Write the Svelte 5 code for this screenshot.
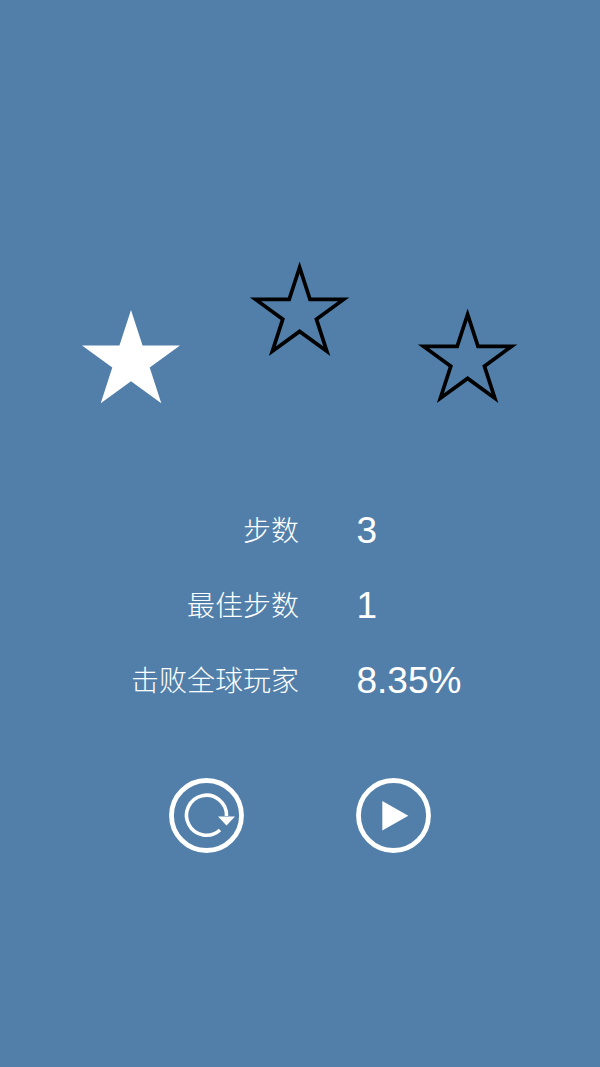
<script>
  function starPoints(radius, cx, cy) {
    const pts = [];
    for (let i = 0; i < 10; i++) {
      const r = i % 2 ? radius * 0.382 : radius;
      const a = (Math.PI / 5) * i - Math.PI / 2;
      pts.push((cx + r * Math.cos(a)).toFixed(2) + ',' + (cy + r * Math.sin(a)).toFixed(2));
    }
    return pts.join(' ');
  }
  const filled = starPoints(51.5, 49, 51.5);
  const outline = starPoints(46.3, 48.6, 50.7);
  const rows = [
    { label: '步数', value: '3' },
    { label: '最佳步数', value: '1' },
    { label: '击败全球玩家', value: '8.35%' }
  ];
</script>

<main class="page">
  <div class="stars">
    <svg class="star low" width="98" height="93" viewBox="0 0 98 93"><polygon points={filled} fill="#fff" /></svg>
    <svg class="star" width="98" height="93" viewBox="0 0 98 93"><polygon points={outline} fill="none" stroke="#000" stroke-width="3.7" stroke-miterlimit="10" /></svg>
    <svg class="star low" width="98" height="93" viewBox="0 0 98 93"><polygon points={outline} fill="none" stroke="#000" stroke-width="3.7" stroke-miterlimit="10" /></svg>
  </div>

  <div class="stats">
    {#each rows as row}
      <div class="label">{row.label}</div>
      <div class="value">{row.value}</div>
    {/each}
  </div>

  <div class="actions">
    <svg width="75" height="75" viewBox="0 0 75 75" fill="none">
      <circle cx="37.5" cy="37.5" r="35" stroke="#fff" stroke-width="4.8" />
      <path d="M51 52 A20 20 0 1 1 57.5 38" stroke="#fff" stroke-width="3.6" />
      <polygon points="49,38.6 66,38.6 57.5,47.6" fill="#fff" />
    </svg>
    <svg width="75" height="75" viewBox="0 0 75 75" fill="none">
      <circle cx="37.5" cy="37.5" r="35" stroke="#fff" stroke-width="4.8" />
      <polygon points="26.3,23 52.3,37.8 26.3,52.5" fill="#fff" />
    </svg>
  </div>
</main>

<style>
  :global(body) {
    margin: 0;
    background: #527fa9;
  }
  .page {
    height: 1067px;
    box-sizing: border-box;
    padding-top: 263px;
    background: #527fa9;
    color: #fff;
    font-family: "Liberation Sans", "Noto Sans CJK SC", sans-serif;
    overflow: hidden;
  }
  .stars {
    display: flex;
    align-items: flex-start;
    gap: 70.5px;
    padding-left: 82px;
    height: 139px;
  }
  .star {
    display: block;
    flex: none;
    overflow: visible;
  }
  .low {
    margin-top: 47px;
  }
  .stats {
    display: grid;
    grid-template-columns: 299px auto;
    column-gap: 57.5px;
    grid-auto-rows: 75px;
    align-items: center;
    margin-top: 91px;
  }
  .label {
    text-align: right;
    font-size: 28px;
    font-weight: 300;
    padding-bottom: 3px;
  }
  .value {
    font-size: 37px;
  }
  .actions {
    display: flex;
    gap: 112px;
    padding-left: 169px;
    margin-top: 60px;
  }
  .actions svg {
    display: block;
  }
</style>
